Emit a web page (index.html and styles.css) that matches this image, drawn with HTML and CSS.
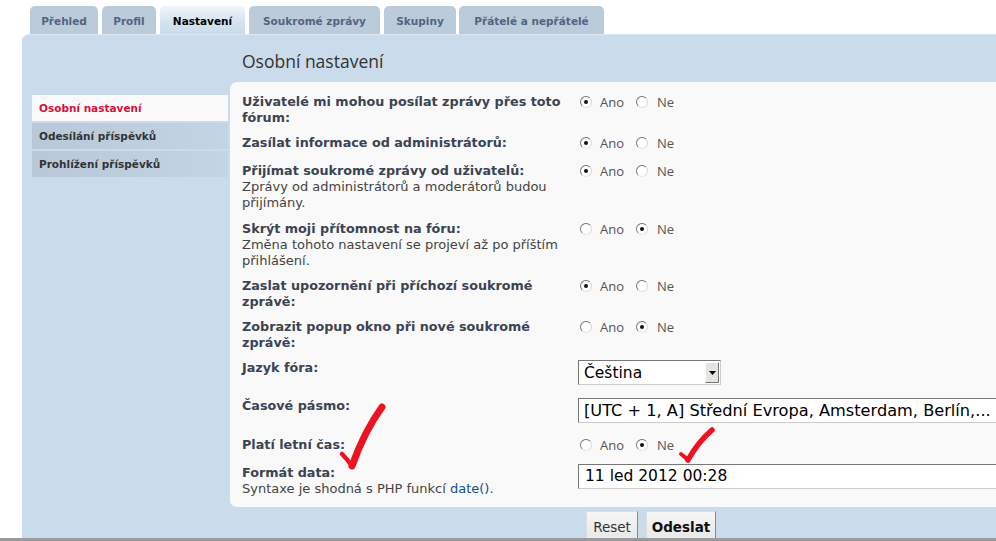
FILE: index.html
```html
<!DOCTYPE html>
<html lang="cs">
<head>
<meta charset="utf-8">
<title>Nastavení</title>
<link rel="stylesheet" href="styles.css">
</head>
<body>
<div class="page">
  <ul class="tabs">
    <li class="tab t1">Přehled</li>
    <li class="tab t2">Profil</li>
    <li class="tab t3 active">Nastavení</li>
    <li class="tab t4">Soukromé zprávy</li>
    <li class="tab t5">Skupiny</li>
    <li class="tab t6">Přátelé a nepřátelé</li>
  </ul>
  <div class="panel">
    <ul class="side">
      <li class="side-item current">Osobní nastavení</li>
      <li class="side-item">Odesílání příspěvků</li>
      <li class="side-item">Prohlížení příspěvků</li>
    </ul>
    <div class="main">
      <h2 class="title">Osobní nastavení</h2>
      <div class="box">
        <div class="row">
          <div class="label"><b>Uživatelé mi mohou posílat zprávy přes toto fórum:</b></div>
          <div class="field radios"><span class="radio on"></span><span class="opt">Ano</span><span class="radio"></span><span class="opt">Ne</span></div>
        </div>
        <div class="row">
          <div class="label"><b>Zasílat informace od administrátorů:</b></div>
          <div class="field radios"><span class="radio on"></span><span class="opt">Ano</span><span class="radio"></span><span class="opt">Ne</span></div>
        </div>
        <div class="row">
          <div class="label"><b>Přijímat soukromé zprávy od uživatelů:</b><span class="desc">Zprávy od administrátorů a moderátorů budou přijímány.</span></div>
          <div class="field radios"><span class="radio on"></span><span class="opt">Ano</span><span class="radio"></span><span class="opt">Ne</span></div>
        </div>
        <div class="row">
          <div class="label"><b>Skrýt moji přítomnost na fóru:</b><span class="desc">Změna tohoto nastavení se projeví až po příštím přihlášení.</span></div>
          <div class="field radios"><span class="radio"></span><span class="opt">Ano</span><span class="radio on"></span><span class="opt">Ne</span></div>
        </div>
        <div class="row">
          <div class="label"><b>Zaslat upozornění při příchozí soukromé zprávě:</b></div>
          <div class="field radios"><span class="radio on"></span><span class="opt">Ano</span><span class="radio"></span><span class="opt">Ne</span></div>
        </div>
        <div class="row">
          <div class="label"><b>Zobrazit popup okno při nové soukromé zprávě:</b></div>
          <div class="field radios"><span class="radio"></span><span class="opt">Ano</span><span class="radio on"></span><span class="opt">Ne</span></div>
        </div>
        <div class="row tall">
          <div class="label"><b>Jazyk fóra:</b></div>
          <div class="field"><div class="select lang"><span class="sel-text">Čeština</span><span class="arrow"><svg width="7" height="4" viewBox="0 0 7 4"><path d="M0 0h7L3.5 4z" fill="#000"/></svg></span></div></div>
        </div>
        <div class="row tall">
          <div class="label"><b>Časové pásmo:</b></div>
          <div class="field"><div class="select tz"><span class="sel-text">[UTC + 1, A] Střední Evropa, Amsterdam, Berlín,...</span></div></div>
        </div>
        <div class="row">
          <div class="label"><b>Platí letní čas:</b></div>
          <div class="field radios"><span class="radio"></span><span class="opt">Ano</span><span class="radio on"></span><span class="opt">Ne</span></div>
        </div>
        <div class="row">
          <div class="label"><b>Formát data:</b><span class="desc">Syntaxe je shodná s PHP funkcí <a class="link">date()</a>.</span></div>
          <div class="field"><div class="input">11 led 2012 00:28</div></div>
        </div>
      </div>
      <div class="buttons">
        <span class="btn reset">Reset</span>
        <span class="btn primary">Odeslat</span>
      </div>
    </div>
  </div>
</div>
<svg class="marks" width="996" height="541" viewBox="0 0 996 541">
  <path d="M342 454 Q347 459 352 466" fill="none" stroke="#ee1122" stroke-width="4.5" stroke-linecap="round"/>
  <path d="M352 466 Q364 432 382 407" fill="none" stroke="#ee1122" stroke-width="7" stroke-linecap="round"/>
  <path d="M681 454 Q685 457 688 460" fill="none" stroke="#ee1122" stroke-width="4" stroke-linecap="round"/>
  <path d="M688 460 Q698 442 712 430" fill="none" stroke="#ee1122" stroke-width="5.5" stroke-linecap="round"/>
</svg>
</body>
</html>
```
FILE: styles.css
```css
html, body {
  margin: 0;
  padding: 0;
  background: #fff;
}
body {
  height: 538px;
  overflow: hidden;
  border-bottom: 3px solid #9a9a9a;
  font-family: "DejaVu Sans", Verdana, sans-serif;
  position: relative;
}
.page {
  width: 1200px;
}
.tabs {
  list-style: none;
  margin: 0;
  padding: 6px 0 0 30px;
  display: flex;
  gap: 4px;
  height: 28px;
}
.tab {
  height: 28px;
  box-sizing: border-box;
  border-radius: 5px 5px 0 0;
  background: #bccbda;
  color: #536482;
  font-weight: bold;
  font-size: 10.5px;
  display: flex;
  align-items: center;
  justify-content: center;
  padding-top: 1px;
}
.t1 { width: 68px; }
.t2 { width: 54px; }
.t3 { width: 85px; }
.t4 { width: 131px; }
.t5 { width: 72px; }
.t6 { width: 145px; margin-left: -1px; }
.tab.active {
  background: linear-gradient(#f0f5fa, #d3e2ef 60%, #cadceb);
  color: #000;
}
.panel {
  margin-left: 22px;
  background: #cadceb;
  border-radius: 7px 0 0 0;
  border-top: 1px solid #dbe7f2;
  display: flex;
  height: 503px;
}
.side {
  list-style: none;
  margin: 60px 0 0 10px;
  padding: 0;
  width: 196px;
  display: flex;
  flex-direction: column;
  gap: 2px;
}
.side-item {
  height: 26px;
  box-sizing: border-box;
  padding: 0 0 0 7px;
  display: flex;
  align-items: center;
  font-size: 10.5px;
  font-weight: bold;
  color: #333;
  background: linear-gradient(90deg, #b8c8d9, #c3d4e5);
}
.side-item.current {
  background: #fafafa;
  color: #d31141;
}
.main {
  margin-left: 2px;
  width: 840px;
  flex: none;
}
.title {
  margin: 0;
  padding: 14px 0 0 12px;
  height: 33px;
  font-family: "Open Sans", "DejaVu Sans", sans-serif;
  font-weight: normal;
  font-size: 17.5px;
  color: #333;
}
.box {
  background: #f9f9f9;
  border-radius: 7px;
  padding: 12px 0 10px 12px;
  display: flex;
  flex-direction: column;
  gap: 9.2px;
}
.row {
  display: flex;
  align-items: flex-start;
}
.row.tall {
  min-height: 29px;
}
.label {
  width: 336px;
  font-size: 13px;
  line-height: 16px;
  color: #3b4453;
}
.label b {
  display: block;
  font-weight: bold;
  font-size: 12.75px;
  width: 326px;
}
.desc {
  display: block;
  font-weight: normal;
  color: #444;
  width: 326px;
}
.link {
  color: #105289;
}
.field {
  flex: 1;
}
.radios {
  display: flex;
  align-items: center;
  height: 16px;
  padding-bottom: 3px;
}
.radio {
  width: 12px;
  height: 12px;
  box-sizing: border-box;
  border-radius: 50%;
  border: 1px solid;
  border-color: #6f6f6f #d8d8d8 #e4e4e4 #7a7a7a;
  background: #fff;
  margin: 0 0 0 2px;
  display: flex;
  align-items: center;
  justify-content: center;
}
.radio.on::after {
  content: "";
  width: 4px;
  height: 4px;
  border-radius: 50%;
  background: #111;
}
.opt {
  font-family: "Open Sans", "DejaVu Sans", sans-serif;
  font-size: 13px;
  color: #555;
  margin: 0 12px 0 8px;
}
.opt + .radio { margin-left: 0; }
.radio + .opt + .radio + .opt { margin-left: 9px; }
.select, .input {
  height: 25px;
  box-sizing: border-box;
  border: 1px solid #8d8d8d;
  border-color: #777 #ccc #ccc #777;
  background: #fff;
  display: flex;
  align-items: center;
  font-size: 15.5px;
  color: #000;
}
.select.lang {
  width: 143px;
  justify-content: space-between;
}
.sel-text {
  padding-left: 5px;
  white-space: nowrap;
}
.arrow {
  width: 14px;
  height: 21px;
  margin-right: 1px;
  background: #e6e4e0;
  border: 1px solid;
  border-color: #fff #777 #777 #fff;
  box-sizing: border-box;
  display: flex;
  align-items: center;
  justify-content: center;
}
.select.tz {
  width: 440px;
  font-size: 16.2px;
}
.input {
  width: 440px;
  padding-left: 6px;
  margin-top: -1px;
}
.buttons {
  padding: 4px 0 0 356px;
  display: flex;
  gap: 8px;
}
.btn {
  height: 30px;
  box-sizing: border-box;
  padding-top: 3px;
  border: 1px solid;
  border-color: #ddd #888 #888 #ddd;
  background: linear-gradient(#f6f6f6, #e8e8e8);
  font-size: 13.5px;
  color: #333;
  display: flex;
  align-items: center;
  justify-content: center;
}
.btn.reset { width: 52px; }
.btn.primary {
  width: 70px;
  font-weight: bold;
  color: #111;
}
.marks {
  position: absolute;
  left: 0;
  top: 0;
  pointer-events: none;
}
```
